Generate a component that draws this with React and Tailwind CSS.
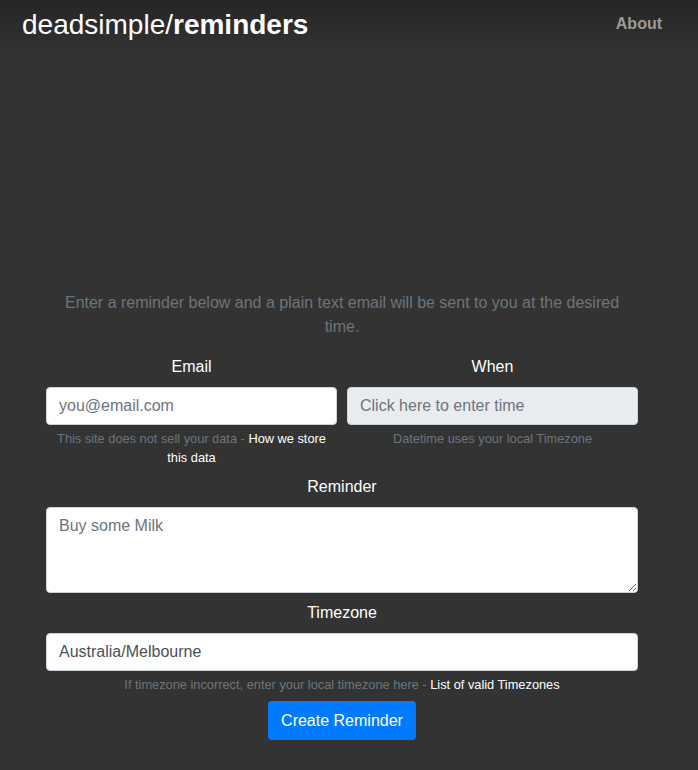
import { useState } from 'react'

const Label = ({ children }) => (
    <label className="block text-center text-white text-[16px] leading-6 mb-2">{children}</label>
)

const inputCls = "block w-full h-[38px] px-3 text-[16px] leading-6 text-[#495057] placeholder:text-[#6c757d] border border-[#ced4da] rounded-[4px] outline-none"

const App = () => {
    const [email, setEmail] = useState('')
    const [reminder, setReminder] = useState('')
    const [tz, setTz] = useState('Australia/Melbourne')

    return (
        <div className="min-h-[770px] bg-[#333333] font-['Liberation_Sans',Arial,sans-serif]">
            <div className="h-[60px] bg-gradient-to-b from-[#262626] to-[#333333]">
                <div className="flex h-12 items-center justify-between pl-[22px] pr-[36px]">
                    <a className="text-[28px] leading-none text-white mt-px">
                        deadsimple/<span className="font-bold">reminders</span>
                    </a>
                    <a className="text-[16px] font-bold text-[#9a9a9a] -mt-px">About</a>
                </div>
            </div>

            {/* empty block above the form */}
            <div className="h-[231px]"></div>

            <div className="ml-[46px] w-[592px]">
                <p className="text-center text-[16px] leading-6 text-[#6c757d] mb-[16px]">
                    Enter a reminder below and a plain text email will be sent to you at the desired time.
                </p>

                <div className="grid grid-cols-2 gap-x-[10px]">
                    <div>
                        <Label>Email</Label>
                        <input className={`${inputCls} bg-white`} placeholder="you@email.com" value={email} onChange={(e) => setEmail(e.target.value)} />
                        <p className="mt-1 text-center text-[12.8px] leading-[19px] text-[#6c757d]">
                            This site does not sell your data - <a className="text-white">How we store this data</a>
                        </p>
                    </div>
                    <div>
                        <Label>When</Label>
                        <input readOnly className={`${inputCls} bg-[#e9ecef]`} placeholder="Click here to enter time" />
                        <p className="mt-1 text-center text-[12.8px] leading-[19px] text-[#6c757d]">
                            Datetime uses your local Timezone
                        </p>
                    </div>
                </div>

                <div className="mt-2">
                    <Label>Reminder</Label>
                    <textarea rows={3} className="block w-full h-[86px] px-3 py-[6px] text-[16px] leading-6 text-[#495057] placeholder:text-[#6c757d] bg-white border border-[#ced4da] rounded-[4px] outline-none" placeholder="Buy some Milk" value={reminder} onChange={(e) => setReminder(e.target.value)} />
                </div>

                <div className="mt-2">
                    <Label>Timezone</Label>
                    <input className={`${inputCls} bg-white`} value={tz} onChange={(e) => setTz(e.target.value)} />
                    <p className="mt-1 text-center text-[12.8px] leading-[19px] text-[#6c757d]">
                        If timezone incorrect, enter your local timezone here - <a className="text-white">List of valid Timezones</a>
                    </p>
                </div>

                <div className="flex justify-center mt-[7px]">
                    <button className="h-[39px] px-[13px] rounded-[4px] bg-[#007bff] text-white text-[16px] leading-6">Create Reminder</button>
                </div>
            </div>
        </div>
    )
}

export default App
